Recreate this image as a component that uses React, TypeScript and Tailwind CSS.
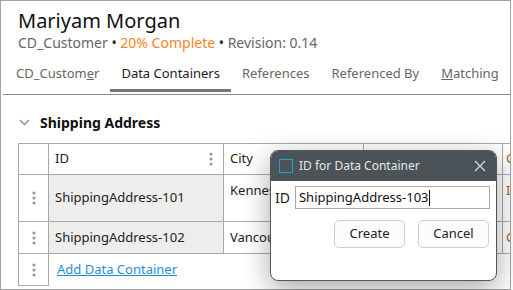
import React from "react";

const font = { fontFamily: '"Noto Sans", "Open Sans", sans-serif' };

const Kebab = ( { color = "#9a9a9a" }: { color?: string } ) => (
    <svg width="4" height="14" viewBox="0 0 4 14">
        <circle cx="2" cy="2" r="1.6" fill={ color } />
        <circle cx="2" cy="7" r="1.6" fill={ color } />
        <circle cx="2" cy="12" r="1.6" fill={ color } />
    </svg>
);

const Tab = ( { children, active = false }: { children: React.ReactNode; active?: boolean } ) => (
    <div className="relative px-[11px] h-[34px] pt-[4px] leading-[18px]">
        <span className={ active ? "text-[#222]" : "text-[#666]" }>{ children }</span>
        { active && <div className="absolute left-0 right-0 bottom-[2px] h-[3px] bg-[#777]" /> }
    </div>
);

const App = () =>
{
    return (
        <div className="w-[513px] h-[290px] bg-white relative overflow-hidden" style={ font }>
            <div className="w-[511px] h-[290px] border border-[#a3a3a3] overflow-hidden">
                <div className="px-[17px] pt-[7px]">
                    <div className="text-[20px] leading-[25px] text-[#111]">Mariyam Morgan</div>
                    <div className="text-[14px] leading-[18px] text-[#666] mt-[1px]">
                        CD_Customer <span className="text-[#222]">•</span> <span className="text-[#f7831f]">20% Complete</span> <span className="text-[#222]">•</span> Revision: 0.14
                    </div>
                </div>
                <div className="flex pl-[4px] text-[13px] mt-[8px]">
                    <Tab>CD_Custom<span className="underline">e</span>r</Tab>
                    <Tab active>Data Containers</Tab>
                    <Tab>References</Tab>
                    <Tab>Referenced By</Tab>
                    <Tab><span className="underline">M</span>atching</Tab>
                </div>
                <div className="ml-[2px] h-px bg-[#8a8a8a]" />

                <div className="flex items-center pl-[18px] mt-[18px] h-[18px]">
                    <svg width="11" height="7" viewBox="0 0 11 7" className="mr-[10px]">
                        <path d="M1 1 L5.5 5.5 L10 1" fill="none" stroke="#8a8a8a" strokeWidth="1.3" />
                    </svg>
                    <span className="text-[14px] font-bold text-[#111]">Shipping Address</span>
                </div>

                <div className="ml-[17px] mt-[12px] text-[13px] text-[#222] w-[600px]">
                    <div className="flex h-[32px] border-t border-[#a8a8a8]">
                        <div className="w-[31px] border-l border-r border-b border-[#a8a8a8]" />
                        <div className="w-[175px] border-r border-b border-[#a8a8a8] flex items-center justify-between pl-[6px] pr-[10px]">
                            <span>ID</span>
                            <Kebab />
                        </div>
                        <div className="w-[140px] border-r border-b border-[#a8a8a8] flex items-center pl-[6px]">City</div>
                        <div className="w-[139px] border-r border-b border-[#a8a8a8]" />
                        <div className="w-[100px] border-b border-[#a8a8a8] flex items-center pl-[3px] text-[#b0601a]">C</div>
                    </div>
                    <div className="flex h-[47px]">
                        <div className="w-[31px] border-l border-r border-b border-[#a8a8a8] flex items-center justify-center"><Kebab /></div>
                        <div className="w-[175px] border-r border-b border-[#a8a8a8] bg-[#ededed] flex items-center pl-[6px]">ShippingAddress-101</div>
                        <div className="w-[140px] border-r border-b border-[#a8a8a8] pl-[6px] pt-[6px]">Kennesaw</div>
                        <div className="w-[139px] border-r border-b border-[#a8a8a8]" />
                        <div className="w-[100px] border-b border-[#a8a8a8] pl-[3px] pt-[6px] text-[#b0601a]">I</div>
                    </div>
                    <div className="flex h-[32px]">
                        <div className="w-[31px] border-l border-r border-b border-[#a8a8a8] flex items-center justify-center"><Kebab /></div>
                        <div className="w-[175px] border-r border-b border-[#a8a8a8] bg-[#ededed] flex items-center pl-[6px]">ShippingAddress-102</div>
                        <div className="w-[140px] border-r border-b border-[#a8a8a8] flex items-center pl-[6px]">Vancouver</div>
                        <div className="w-[139px] border-r border-b border-[#a8a8a8]" />
                        <div className="w-[100px] border-b border-[#a8a8a8] flex items-center pl-[3px] text-[#b0601a]">C</div>
                    </div>
                    <div className="flex h-[32px]">
                        <div className="w-[31px] border-l border-r border-b border-[#a8a8a8] flex items-center justify-center"><Kebab /></div>
                        <div className="flex items-center pl-[8px]">
                            <a href="#" className="text-[#1e8fd6] underline">Add Data Container</a>
                        </div>
                    </div>
                </div>
            </div>

            <div className="absolute left-[270px] top-[150px] w-[227px] h-[131px] rounded-[8px] border border-[#555] bg-white overflow-hidden shadow-[0_8px_28px_rgba(0,0,0,0.35)] text-[13px]">
                <div className="h-[30px] bg-[#4b5358] flex items-center pl-[8px] pr-[8px]">
                    <div className="w-[14px] h-[14px] border-[1.5px] border-[#1ba3c8]" />
                    <span className="ml-[6px] text-[12px] text-[#e6e6e6]">ID for Data Container</span>
                    <svg width="12" height="12" viewBox="0 0 12 12" className="ml-auto mr-[2px]">
                        <path d="M1 1 L11 11 M11 1 L1 11" stroke="#dcdcdc" strokeWidth="1.2" />
                    </svg>
                </div>
                <div className="flex items-center pl-[4px] pr-[6px] mt-[5px]">
                    <span className="text-[#222] text-[14px]">ID</span>
                    <div className="ml-[5px] flex-1 h-[23px] border border-[#a9a9a9] flex items-center pl-[3px] text-[#111]">
                        ShippingAddress-103<span className="inline-block w-px h-[16px] bg-[#111]" />
                    </div>
                </div>
                <div className="flex justify-end gap-[13px] pr-[7px] mt-[11px]">
                    <button className="w-[71px] h-[28px] rounded-[5px] border border-[#cfcfcf] bg-[#fcfcfc] text-[#222]">Create</button>
                    <button className="w-[71px] h-[28px] rounded-[5px] border border-[#cfcfcf] bg-[#fcfcfc] text-[#222]">Cancel</button>
                </div>
            </div>
        </div>
    );
};

export default App;
